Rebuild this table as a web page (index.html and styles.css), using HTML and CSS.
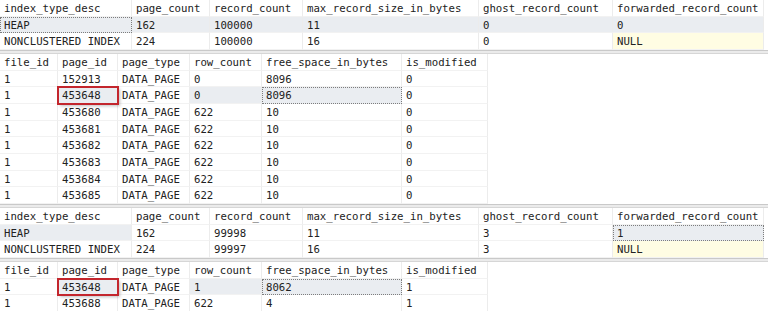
FILE: index.html
```html
<!DOCTYPE html>
<html lang="en">
<head>
    <meta charset="UTF-8">
    <meta name="viewport" content="width=device-width, initial-scale=1.0">
    <title>Results</title>
    <link rel="stylesheet" href="styles.css">
</head>
<body>
    <!-- index stats, before -->
    <div class="grid stats">
        <div class="cell">index_type_desc</div><div class="cell">page_count</div><div class="cell">record_count</div><div class="cell">max_record_size_in_bytes</div><div class="cell">ghost_record_count</div><div class="cell">forwarded_record_count</div>
        <div class="cell sel focus">HEAP</div><div class="cell sel">162</div><div class="cell sel">100000</div><div class="cell sel">11</div><div class="cell sel">0</div><div class="cell sel">0</div>
        <div class="cell">NONCLUSTERED INDEX</div><div class="cell">224</div><div class="cell">100000</div><div class="cell">16</div><div class="cell">0</div><div class="cell null">NULL</div>
    </div>
    <div class="splitter"></div>

    <!-- pages, before -->
    <div class="grid pages">
        <div class="cell">file_id</div><div class="cell">page_id</div><div class="cell">page_type</div><div class="cell">row_count</div><div class="cell">free_space_in_bytes</div><div class="cell">is_modified</div>
        <div class="cell">1</div><div class="cell">152913</div><div class="cell">DATA_PAGE</div><div class="cell">0</div><div class="cell">8096</div><div class="cell">0</div>
        <div class="cell">1</div><div class="cell sel marked">453648</div><div class="cell">DATA_PAGE</div><div class="cell sel">0</div><div class="cell sel focus">8096</div><div class="cell">0</div>
        <div class="cell">1</div><div class="cell">453680</div><div class="cell">DATA_PAGE</div><div class="cell">622</div><div class="cell">10</div><div class="cell">0</div>
        <div class="cell">1</div><div class="cell">453681</div><div class="cell">DATA_PAGE</div><div class="cell">622</div><div class="cell">10</div><div class="cell">0</div>
        <div class="cell">1</div><div class="cell">453682</div><div class="cell">DATA_PAGE</div><div class="cell">622</div><div class="cell">10</div><div class="cell">0</div>
        <div class="cell">1</div><div class="cell">453683</div><div class="cell">DATA_PAGE</div><div class="cell">622</div><div class="cell">10</div><div class="cell">0</div>
        <div class="cell">1</div><div class="cell">453684</div><div class="cell">DATA_PAGE</div><div class="cell">622</div><div class="cell">10</div><div class="cell">0</div>
        <div class="cell">1</div><div class="cell">453685</div><div class="cell">DATA_PAGE</div><div class="cell">622</div><div class="cell">10</div><div class="cell">0</div>
    </div>
    <div class="splitter"></div>

    <!-- index stats, after -->
    <div class="grid stats">
        <div class="cell">index_type_desc</div><div class="cell">page_count</div><div class="cell">record_count</div><div class="cell">max_record_size_in_bytes</div><div class="cell">ghost_record_count</div><div class="cell">forwarded_record_count</div>
        <div class="cell sel">HEAP</div><div class="cell">162</div><div class="cell">99998</div><div class="cell">11</div><div class="cell">3</div><div class="cell sel focus">1</div>
        <div class="cell">NONCLUSTERED INDEX</div><div class="cell">224</div><div class="cell">99997</div><div class="cell">16</div><div class="cell">3</div><div class="cell null">NULL</div>
    </div>
    <div class="splitter"></div>

    <!-- pages, after -->
    <div class="grid pages">
        <div class="cell">file_id</div><div class="cell">page_id</div><div class="cell">page_type</div><div class="cell">row_count</div><div class="cell">free_space_in_bytes</div><div class="cell">is_modified</div>
        <div class="cell">1</div><div class="cell sel marked">453648</div><div class="cell">DATA_PAGE</div><div class="cell sel">1</div><div class="cell sel focus">8062</div><div class="cell">1</div>
        <div class="cell">1</div><div class="cell">453688</div><div class="cell">DATA_PAGE</div><div class="cell">622</div><div class="cell">4</div><div class="cell">1</div>
    </div>
</body>
</html>
```
FILE: styles.css
```css
body {
    margin: 0;
    background-color: white;
    font-family: "DejaVu Sans Mono", monospace;
    font-size: 10.7px;
    color: #222;
    overflow: hidden;
}
.grid {
    display: grid;
    grid-auto-rows: 16.67px;
}
.stats {
    grid-template-columns: 132px 78px 93px 176px 134px 151px;
}
.pages {
    grid-template-columns: 58px 60px 72px 72px 140px 86px;
}
.cell {
    box-sizing: border-box;
    padding-left: 4px;
    line-height: 17px;
    white-space: nowrap;
    overflow: hidden;
    border-right: 1px solid #ececec;
    border-bottom: 1px solid #f2f2f2;
    position: relative;
}
.sel {
    background-color: #eaedf1;
}
.focus {
    border: 1px dotted #7d7d7d;
    padding-left: 3px;
    line-height: 15px;
}
.null {
    background-color: #fffde3;
}
.marked {
    overflow: visible;
    z-index: 1;
    outline: 2px solid #c3262d;
    outline-offset: -1px;
    box-shadow: 2px 2px 3px rgba(0, 0, 0, 0.25);
}
.splitter {
    height: 2px;
    background-color: #ebebeb;
    border-top: 1px solid #c9c9c9;
    border-bottom: 1px solid #d6d6d6;
}
```
